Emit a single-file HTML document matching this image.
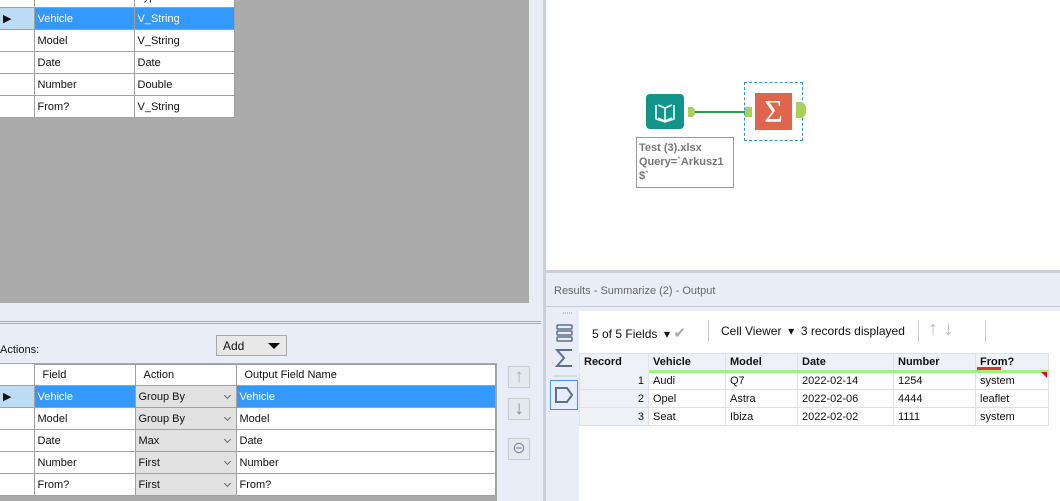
<!DOCTYPE html>
<html><head><style>
*{box-sizing:border-box;margin:0;padding:0}
body{width:1060px;height:501px;overflow:hidden;position:relative;font-family:"Liberation Sans",sans-serif;font-size:11px;color:#111;background:#fff}
.a{position:absolute}
table{border-collapse:collapse;position:absolute}
td{border:1px solid #a0a0a0;padding:0 3px;white-space:nowrap;overflow:hidden}
.sel td.c{background:#3399ff;color:#fff}
.rh{background:#fff;border-left:none}
.selh{background:#bcdcf4}
.dd{background:#e1e1e1;position:relative}
.dd:after{content:"";position:absolute;right:6px;top:7px;width:4px;height:4px;border-right:1px solid #666;border-bottom:1px solid #666;transform:rotate(45deg)}
.btn{position:absolute;width:22px;height:22px;border:1px solid #c5cad3;background:#e4e8ef;color:#7d8ba3;text-align:center;font-size:19px;line-height:20px;font-weight:bold}
.rt td{border:1px solid #dde2ea;height:18px;padding:0 4px}
.rt tr.h td{font-weight:bold;background:#eef1f6;border-bottom:3px solid #9df57d;height:18px}
</style></head><body>
<div class="a" style="left:0;top:0;width:529px;height:303px;background:#ababab"></div>
<div class="a" style="left:529px;top:0;width:14px;height:303px;background:#e8ecf5"></div>
<table style="left:0;top:-15px;width:235px">
<tr style="height:22px"><td class="rh" style="width:34px"></td><td style="width:100px;background:#fff">Field</td><td style="background:#fff">Type</td></tr>
<tr class="sel" style="height:22px"><td class="rh selh">▶</td><td class="c">Vehicle</td><td class="c">V_String</td></tr>
<tr style="height:22px;background:#fff"><td class="rh"></td><td>Model</td><td>V_String</td></tr>
<tr style="height:22px;background:#fff"><td class="rh"></td><td>Date</td><td>Date</td></tr>
<tr style="height:22px;background:#fff"><td class="rh"></td><td>Number</td><td>Double</td></tr>
<tr style="height:22px;background:#fff"><td class="rh"></td><td>From?</td><td>V_String</td></tr>
</table>
<div class="a" style="left:0;top:303px;width:543px;height:198px;background:#e9edf7"></div>
<div class="a" style="left:0;top:321px;width:541px;height:3px;border-top:1px solid #a8acb4;border-bottom:1px solid #a8acb4"></div>
<div class="a" style="left:0;top:344px">Actions:</div>
<div class="a" style="left:216px;top:335px;width:71px;height:21px;border:1px solid #a8a8a8;background:#e8e8e8;padding:3px 6px;font-size:12px">Add<span style="position:absolute;right:6px;top:7px;border:6px solid transparent;border-top:6px solid #000;border-bottom:none"></span></div>
<div class="a" style="left:0;top:363px;width:497px;height:138px;background:#a8a8a8"></div>
<table style="left:0;top:364px;width:496px;background:#fff">
<tr style="height:21px"><td class="rh" style="width:34px;border-top:none"></td><td style="width:101px;padding-left:8px">Field</td><td style="width:101px;padding-left:8px">Action</td><td style="padding-left:8px">Output Field Name</td></tr>
<tr class="sel" style="height:22px"><td class="rh selh">▶</td><td class="c">Vehicle</td><td class="dd">Group By</td><td class="c">Vehicle</td></tr>
<tr style="height:22px"><td class="rh"></td><td>Model</td><td class="dd">Group By</td><td>Model</td></tr>
<tr style="height:22px"><td class="rh"></td><td>Date</td><td class="dd">Max</td><td>Date</td></tr>
<tr style="height:22px"><td class="rh"></td><td>Number</td><td class="dd">First</td><td>Number</td></tr>
<tr style="height:22px"><td class="rh"></td><td>From?</td><td class="dd">First</td><td>From?</td></tr>
</table>
<div class="btn" style="left:508px;top:366px;color:#a9b3c3">↑</div>
<div class="btn" style="left:508px;top:398px">↓</div>
<div class="btn" style="left:508px;top:438px;font-size:16px;font-weight:normal">⊝</div>
<div class="a" style="left:543px;top:0;width:3px;height:501px;background:#c9cfdb"></div>
<div class="a" style="left:646px;top:94px;width:38px;height:35px;background:#12948a;border-radius:4px"></div>
<svg class="a" style="left:646px;top:94px" width="38" height="35"><path d="M10 11v14l9 3 9-3V11M19 14v14M12 24l7 3 7-3" stroke="#fff" stroke-width="1.5" fill="none"/><path d="M12 11l7 3 7-3" stroke="#fff" stroke-width="1.5" fill="none"/></svg>
<div class="a" style="left:688px;top:107px;width:7px;height:10px;background:#a7d05c;border-radius:0 4px 4px 0"></div>
<div class="a" style="left:695px;top:111px;width:51px;height:2px;background:#2f9a4a"></div>
<div class="a" style="left:745px;top:107px;width:7px;height:10px;background:#a7d05c"></div>
<div class="a" style="left:744px;top:82px;width:59px;height:59px;border:1px dashed #3b8de0"></div>
<div class="a" style="left:755px;top:93px;width:37px;height:37px;background:#e0664b;color:#fff;font-size:32px;line-height:37px;text-align:center;font-family:'Liberation Serif',serif">Σ</div>
<div class="a" style="left:796px;top:102px;width:10px;height:16px;background:#a7d05c;border-radius:0 6px 6px 0"></div>
<div class="a" style="left:636px;top:137px;width:98px;height:51px;border:1px solid #999;background:#fff;color:#777;font-size:11px;line-height:14px;padding:3px 2px;font-weight:bold">Test (3).xlsx<br>Query=`Arkusz1<br>$`</div>
<div class="a" style="left:546px;top:270px;width:514px;height:231px;background:#e9edf7"></div>
<div class="a" style="left:546px;top:270px;width:514px;height:3px;background:#c9cfdb"></div>
<div class="a" style="left:554px;top:285px;color:#666;font-size:11px">Results - Summarize (2) - Output</div>
<div class="a" style="left:546px;top:306px;width:514px;height:1px;background:#c5cad3"></div>
<div class="a" style="left:579px;top:311px;width:481px;height:190px;background:#fff"></div>
<svg class="a" style="left:553px;top:312px" width="24" height="100">
<path d="M10 1h10" stroke="#99a" stroke-width="1" stroke-dasharray="1 1"/>
<rect x="4" y="13" width="15" height="4" rx="1" fill="none" stroke="#5f6f8c" stroke-width="1.5"/>
<rect x="4" y="19" width="15" height="4" rx="1" fill="none" stroke="#5f6f8c" stroke-width="1.5"/>
<rect x="4" y="25" width="15" height="4" rx="1" fill="none" stroke="#5f6f8c" stroke-width="1.5"/>
<path d="M19 38H4l7 8-7 8h15" fill="none" stroke="#5f6f8c" stroke-width="2"/>
<path d="M0 64h24" stroke="#c5cad3"/>
</svg>
<div class="a" style="left:550px;top:380px;width:28px;height:30px;border:1px solid #4a90e2;background:#e6eefb"></div>
<svg class="a" style="left:553px;top:384px" width="22" height="22"><path d="M3 4h11l5 7-5 7H3z" fill="none" stroke="#5f6f8c" stroke-width="2"/></svg>
<div class="a" style="left:592px;top:324px;font-size:12px">5 of 5 Fields &nbsp;▾ <span style="color:#aaa;font-size:15px">✔</span></div>
<div class="a" style="left:708px;top:320px;width:1px;height:22px;background:#ccc"></div>
<div class="a" style="left:721px;top:324px;font-size:12px">Cell Viewer &nbsp;▾ &nbsp;3 records displayed</div>
<div class="a" style="left:918px;top:320px;width:1px;height:22px;background:#ccc"></div>
<div class="a" style="left:928px;top:318px;font-size:20px;color:#bbb">↑ ↓</div>
<div class="a" style="left:985px;top:320px;width:1px;height:22px;background:#ccc"></div>
<table class="rt" style="left:579px;top:353px;width:470px;font-size:11px">
<tr class="h"><td style="width:69px;border-bottom-color:#eef1f6">Record</td><td style="width:77px">Vehicle</td><td style="width:72px">Model</td><td style="width:96px">Date</td><td style="width:82px">Number</td><td>From?</td></tr>
<tr><td style="text-align:right;background:#eef1f6">1</td><td>Audi</td><td>Q7</td><td>2022-02-14</td><td>1254</td><td>system</td></tr>
<tr><td style="text-align:right;background:#eef1f6">2</td><td>Opel</td><td>Astra</td><td>2022-02-06</td><td>4444</td><td>leaflet</td></tr>
<tr><td style="text-align:right;background:#eef1f6">3</td><td>Seat</td><td>Ibiza</td><td>2022-02-02</td><td>1111</td><td>system</td></tr>
</table>
<div class="a" style="left:977px;top:367px;width:24px;height:3px;background:#e23030"></div>
<div class="a" style="left:1041px;top:372px;width:0;height:0;border-left:6px solid transparent;border-top:6px solid #e00"></div>
</body></html>
